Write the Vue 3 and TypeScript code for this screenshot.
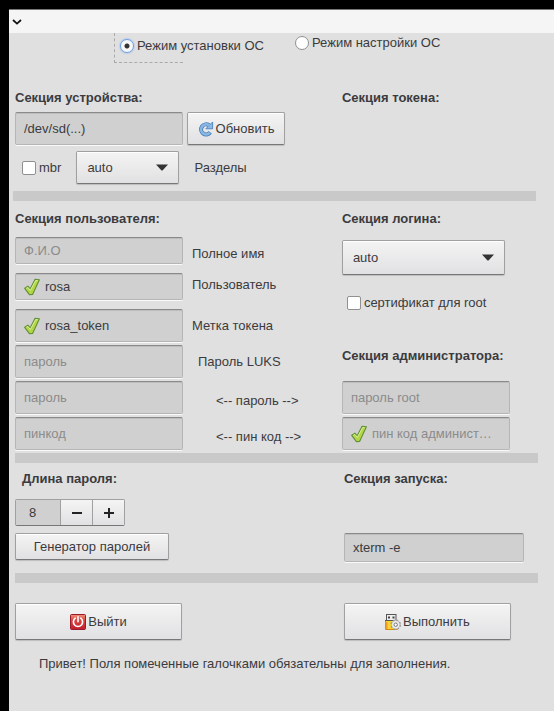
<script setup lang="ts">
import { ref } from 'vue'

interface UserField {
  id: string
  label: string
  placeholder: string
  value: string
  required: boolean
  type: string
  size: string
  place: string
}

const mode = ref('install')
const device = ref('/dev/sd(...)')
const mbr = ref(false)
const partition = ref('auto')
const login = ref('auto')
const rootCert = ref(false)
const rootPassword = ref('')
const adminPin = ref('')
const passwordLength = ref(8)
const command = ref('xterm -e')

const fields = ref<UserField[]>([
  { id: 'fullname', label: 'Полное имя', placeholder: 'Ф.И.О', value: '', required: false, type: 'text', size: 'short', place: 'mid' },
  { id: 'user', label: 'Пользователь', placeholder: '', value: 'rosa', required: true, type: 'text', size: 'short', place: 'top' },
  { id: 'token', label: 'Метка токена', placeholder: '', value: 'rosa_token', required: true, type: 'text', size: 'tall', place: 'mid' },
  { id: 'luks', label: 'Пароль LUKS', placeholder: 'пароль', value: '', required: false, type: 'password', size: 'tall', place: 'mid shift' },
  { id: 'password', label: '<-- пароль -->', placeholder: 'пароль', value: '', required: false, type: 'password', size: 'tall', place: 'low far' },
  { id: 'pin', label: '<-- пин код -->', placeholder: 'пинкод', value: '', required: false, type: 'password', size: 'tall', place: 'low far' },
])

function step(delta: number) {
  passwordLength.value = Math.max(1, passwordLength.value + delta)
}

function generate() {
  const chars = 'abcdefghijkmnpqrstuvwxyz23456789'
  let out = ''
  for (let i = 0; i < passwordLength.value; i++) {
    out += chars[Math.floor(Math.random() * chars.length)]
  }
  fields.value[4].value = out
}
</script>

<template>
  <div class="screen">
    <div class="window">
      <header class="titlebar">
        <button class="menu" type="button" aria-label="Меню окна">
          <svg width="10" height="6" viewBox="0 0 10 6"><path d="M1 1l4 3.6L9 1" fill="none" stroke="#111" stroke-width="1.7" /></svg>
        </button>
      </header>

      <main>
        <div class="modes">
          <div class="focus">
            <label class="option"><input v-model="mode" type="radio" name="mode" value="install" />Режим установки ОС</label>
          </div>
          <label class="option"><input v-model="mode" type="radio" name="mode" value="setup" />Режим настройки ОС</label>
        </div>

        <section class="columns device">
          <div>
            <h2 id="device-title">Секция устройства:</h2>
            <div class="row">
              <input v-model="device" class="entry tall" type="text" aria-labelledby="device-title" />
              <button class="btn refresh" type="button">
                <svg width="16" height="16" viewBox="0 0 16 16">
                  <path d="M12.200 11.300A5 5 0 1 1 11 4.300" fill="none" stroke="#4a82bd" stroke-width="4.200" />
                  <path d="M14.600 1v6.800H7.800z" fill="#8dbbe6" stroke="#4a82bd" stroke-width=".9" stroke-linejoin="round" />
                  <path d="M11.800 11.700A5 5 0 1 1 11.300 4.500" fill="none" stroke="#8ab7e2" stroke-width="2.600" />
                </svg>
                <span>Обновить</span>
              </button>
            </div>
            <div class="row parts">
              <label class="option"><input v-model="mbr" type="checkbox" />mbr</label>
              <div class="combo">
                <select id="parts" v-model="partition"><option>auto</option></select>
                <svg width="12" height="7" viewBox="0 0 12 7"><path d="M0 .5h12L6.500 6.500h-1z" fill="#333" /></svg>
              </div>
              <label class="parts-label" for="parts">Разделы</label>
            </div>
          </div>
          <h2>Секция токена:</h2>
        </section>

        <hr />

        <section class="columns users">
          <div>
            <h2>Секция пользователя:</h2>
            <div v-for="f in fields" :key="f.id" class="field">
              <div class="stack">
                <input :id="f.id" v-model="f.value" class="entry" :class="[f.size, { marked: f.required }]" :type="f.type" :placeholder="f.placeholder" />
                <svg v-if="f.required" width="16" height="18" viewBox="0 0 16 18"><path d="M.7 10.300l3.200-2.200 2.300 2.700L11.100 1.200l4.300.6L8.600 16.400l-3.200.3z" fill="#b3d645" stroke="#5f9038" stroke-width="1.100" stroke-linejoin="round" /><path d="M2.400 10.300l1.400-.9 2.500 3 5.500-9.900 1.900.3" fill="none" stroke="#dcee95" stroke-width="1" /></svg>
              </div>
              <label :for="f.id" :class="f.place">{{ f.label }}</label>
            </div>
          </div>
          <div class="side">
            <h2 id="login-title">Секция логина:</h2>
            <div class="combo wide">
              <select v-model="login" aria-labelledby="login-title"><option>auto</option></select>
              <svg width="12" height="7" viewBox="0 0 12 7"><path d="M0 .5h12L6.500 6.500h-1z" fill="#333" /></svg>
            </div>
            <label class="option cert"><input v-model="rootCert" type="checkbox" />сертификат для root</label>
            <h2 class="admin-title">Секция администратора:</h2>
            <div class="field">
              <input v-model="rootPassword" class="entry tall" type="password" placeholder="пароль root" aria-label="пароль root" />
            </div>
            <div class="field">
              <div class="stack">
                <input v-model="adminPin" class="entry tall marked pin" type="password" placeholder="пин код администратора" aria-label="пин код администратора" />
                <svg width="16" height="18" viewBox="0 0 16 18"><path d="M.7 10.300l3.200-2.200 2.300 2.700L11.100 1.200l4.300.6L8.600 16.400l-3.200.3z" fill="#b3d645" stroke="#5f9038" stroke-width="1.100" stroke-linejoin="round" /><path d="M2.400 10.300l1.400-.9 2.500 3 5.500-9.900 1.900.3" fill="none" stroke="#dcee95" stroke-width="1" /></svg>
              </div>
            </div>
          </div>
        </section>

        <hr />

        <section class="columns launch">
          <div>
            <h2 class="length-title"><label for="length">Длина пароля:</label></h2>
            <div class="spin">
              <input id="length" v-model="passwordLength" type="text" inputmode="numeric" />
              <button type="button" aria-label="Меньше" @click="step(-1)">
                <svg width="12" height="12" viewBox="0 0 12 12"><path d="M1 6h10" stroke="#222" stroke-width="2" /></svg>
              </button>
              <button type="button" aria-label="Больше" @click="step(1)">
                <svg width="12" height="12" viewBox="0 0 12 12"><path d="M1 6h10M6 1v10" stroke="#222" stroke-width="2" /></svg>
              </button>
            </div>
            <button class="btn generate" type="button" @click="generate">Генератор паролей</button>
          </div>
          <div class="run">
            <h2 id="run-title">Секция запуска:</h2>
            <input v-model="command" class="entry command" type="text" aria-labelledby="run-title" />
          </div>
        </section>

        <hr />

        <div class="columns actions">
          <button class="btn big" type="button">
            <svg width="16" height="16" viewBox="0 0 16 16">
              <defs>
                <linearGradient id="red" x1="0" y1="0" x2="0" y2="1">
                  <stop offset="0" stop-color="#ee9078" />
                  <stop offset=".4" stop-color="#dc4540" />
                  <stop offset="1" stop-color="#bd1e2c" />
                </linearGradient>
              </defs>
              <rect x=".5" y=".5" width="15" height="15" rx="1" fill="url(#red)" stroke="#991b2b" />
              <path d="M5.200 4.200a4.600 4.600 0 1 0 5.600 0M8 2.800v5" fill="none" stroke="#fff" stroke-width="1.600" stroke-linecap="round" />
            </svg>
            <span>Выйти</span>
          </button>
          <div class="run">
            <button class="btn big" type="button">
              <svg width="16" height="16" viewBox="0 0 16 16">
                <rect x="1.500" y=".5" width="9.500" height="7" fill="#eee" stroke="#555" />
                <path d="M3 3.500h2M7.500 3.500h2" stroke="#444" stroke-width="2" />
                <path d="M.5 6.500h11.500v9H.5z" fill="#fbd52f" stroke="#d28a12" />
                <path d="M0 6.500h12" stroke="#555" />
                <path d="M1.500 8v7" stroke="#ee9d22" stroke-width="2" />
                <circle cx="10.700" cy="10.700" r="4.500" fill="#e8e8e8" stroke="#8c8c8c" stroke-width="1.500" stroke-dasharray="2 1.530" />
                <circle cx="10.700" cy="10.700" r="4.200" fill="#ececec" stroke="#aaa" stroke-width=".7" />
                <circle cx="10.700" cy="10.700" r="1.700" fill="#fff" stroke="#777" />
              </svg>
              <span>Выполнить</span>
            </button>
          </div>
        </div>

        <p class="status">Привет! Поля помеченные галочками обязательны для заполнения.</p>
      </main>
    </div>
  </div>
</template>

<style>
body {
  margin: 0;
  background: #000;
}
</style>

<style scoped>
.screen {
  box-sizing: border-box;
  min-height: 100vh;
  padding: 9px 0 0 9px;
  display: flex;
  background: #000;
  color: #3b3b3e;
  font: 13px/20px "Liberation Sans", Arial, sans-serif;
}

.window {
  flex: 1;
  min-width: 0;
  background: #e0e0e0;
}

.screen * {
  box-sizing: border-box;
}

input,
select,
button {
  margin: 0;
  font: inherit;
  color: inherit;
}

.titlebar {
  height: 24px;
  display: flex;
  align-items: center;
  background: #f5f5f6;
  border-top: 1px solid #777;
}

.menu {
  display: flex;
  padding: 0 3px;
  border: 0;
  background: none;
}

h2 {
  margin: 0;
  font-size: 13px;
  line-height: 20px;
  font-weight: bold;
}

hr {
  height: 10px;
  margin: 0 16px 0 6px;
  border: 0;
  background: #c9c9c9;
}

.device + hr {
  margin: 0 18px 0 4px;
}

.columns {
  display: grid;
  grid-template-columns: minmax(0, 5fr) minmax(0, 3fr);
  align-items: start;
  padding: 0 16px 0 6px;
}

.modes {
  display: flex;
  align-items: flex-start;
  gap: 112px;
  height: 55px;
  padding-left: 105px;
}

.focus {
  width: 69px;
  height: 30px;
  padding: 3px 0 0 5px;
  border: dashed #aaa;
  border-width: 0 0 1px 1px;
}

.option {
  display: flex;
  align-items: center;
  gap: 3px;
  white-space: nowrap;
}

.option input {
  appearance: none;
  flex: none;
  width: 14px;
  height: 14px;
  background: #fff;
  border: 1px solid #909090;
  border-radius: 2px;
}

.option input[type="radio"] {
  border-radius: 50%;
}

.option input[type="radio"]:checked {
  background: radial-gradient(circle, #333 2px, #f7f7f7 3px);
  border-color: #6f9fe8;
  box-shadow: 0 0 2px #6f9fe8;
}

.option input[type="checkbox"]:checked {
  background: #4a82bd;
}

.entry {
  display: block;
  width: 168px;
  padding: 0 8px;
  background: #d0d0d0;
  border: 1px solid #b5b5b5;
  border-top-color: #8a8a8a;
  border-radius: 2px;
  box-shadow: 0 1px #fafafa, inset 0 1px #bdbdbd;
  outline: 0;
  text-overflow: ellipsis;
}

.entry::placeholder {
  color: #8b8b8b;
  opacity: 1;
  text-overflow: ellipsis;
}

.short {
  height: 27px;
}

.tall {
  height: 33px;
}

.marked {
  padding-left: 29px;
}

.pin {
  padding-right: 12px;
}

.stack,
.combo {
  display: grid;
  align-items: center;
}

.stack > *,
.combo > * {
  grid-area: 1 / 1;
}

.stack svg {
  margin-left: 9px;
  pointer-events: none;
}

.btn,
.combo select {
  background: linear-gradient(#f4f4f4, #e1e1e3);
  border: 1px solid #a0a0a0;
  border-bottom-color: #777;
  border-radius: 2px;
  box-shadow: 0 1px 1px #bdbdbd, inset 0 1px #fff;
}

.btn {
  display: flex;
  align-items: center;
  justify-content: center;
  gap: 2px;
  padding: 0;
}

.combo {
  width: 103px;
}

.combo select {
  appearance: none;
  width: 100%;
  height: 33px;
  padding: 0 10px;
}

.combo svg {
  justify-self: end;
  margin-right: 11px;
  pointer-events: none;
}

.combo.wide {
  width: 163px;
}

.wide select {
  height: 35px;
}

.device {
  padding-bottom: 7px;
}

.device h2 {
  margin-bottom: 4px;
}

.row {
  display: flex;
  align-items: center;
  gap: 4px;
}

.refresh {
  width: 98px;
  height: 33px;
}

.parts {
  margin-top: 6px;
  padding-left: 7px;
  gap: 15px;
}

.users {
  padding-top: 8px;
}

.users h2 {
  margin-bottom: 8px;
}

.field {
  display: flex;
  align-items: flex-start;
  height: 36px;
}

.field label {
  padding-left: 9px;
  line-height: 24px;
}

.field .mid {
  padding-top: 5px;
}

.field .low {
  padding-top: 8px;
}

.field .shift {
  padding-left: 15px;
}

.field .far {
  padding-left: 33px;
}

.side .wide {
  margin-top: 11px;
}

.cert {
  margin-top: 18px;
  padding-left: 5px;
}

.side .admin-title {
  margin: 33px 0 15px;
}

.launch {
  padding-top: 6px;
  padding-bottom: 11px;
}

.length-title {
  padding-left: 7px;
}

.spin {
  display: flex;
  width: 110px;
  height: 27px;
  margin: 10px 0 7px;
  border: 1px solid #a0a0a0;
  border-bottom-color: #777;
  border-radius: 2px;
}

.spin input {
  flex: 1;
  min-width: 0;
  padding: 0 13px;
  border: 0;
  background: #d0d0d0;
  outline: 0;
}

.spin button {
  display: flex;
  align-items: center;
  justify-content: center;
  width: 32px;
  padding: 0;
  border: 0;
  border-left: 1px solid #a0a0a0;
  background: linear-gradient(#f4f4f4, #e1e1e3);
}

.generate {
  width: 154px;
  height: 27px;
}

.run {
  padding-left: 2px;
}

.command {
  width: 180px;
  height: 29px;
  margin-top: 44px;
}

.actions {
  padding-top: 20px;
}

.big {
  width: 167px;
  height: 37px;
}

.status {
  margin: 14px 16px 0 30px;
}
</style>
